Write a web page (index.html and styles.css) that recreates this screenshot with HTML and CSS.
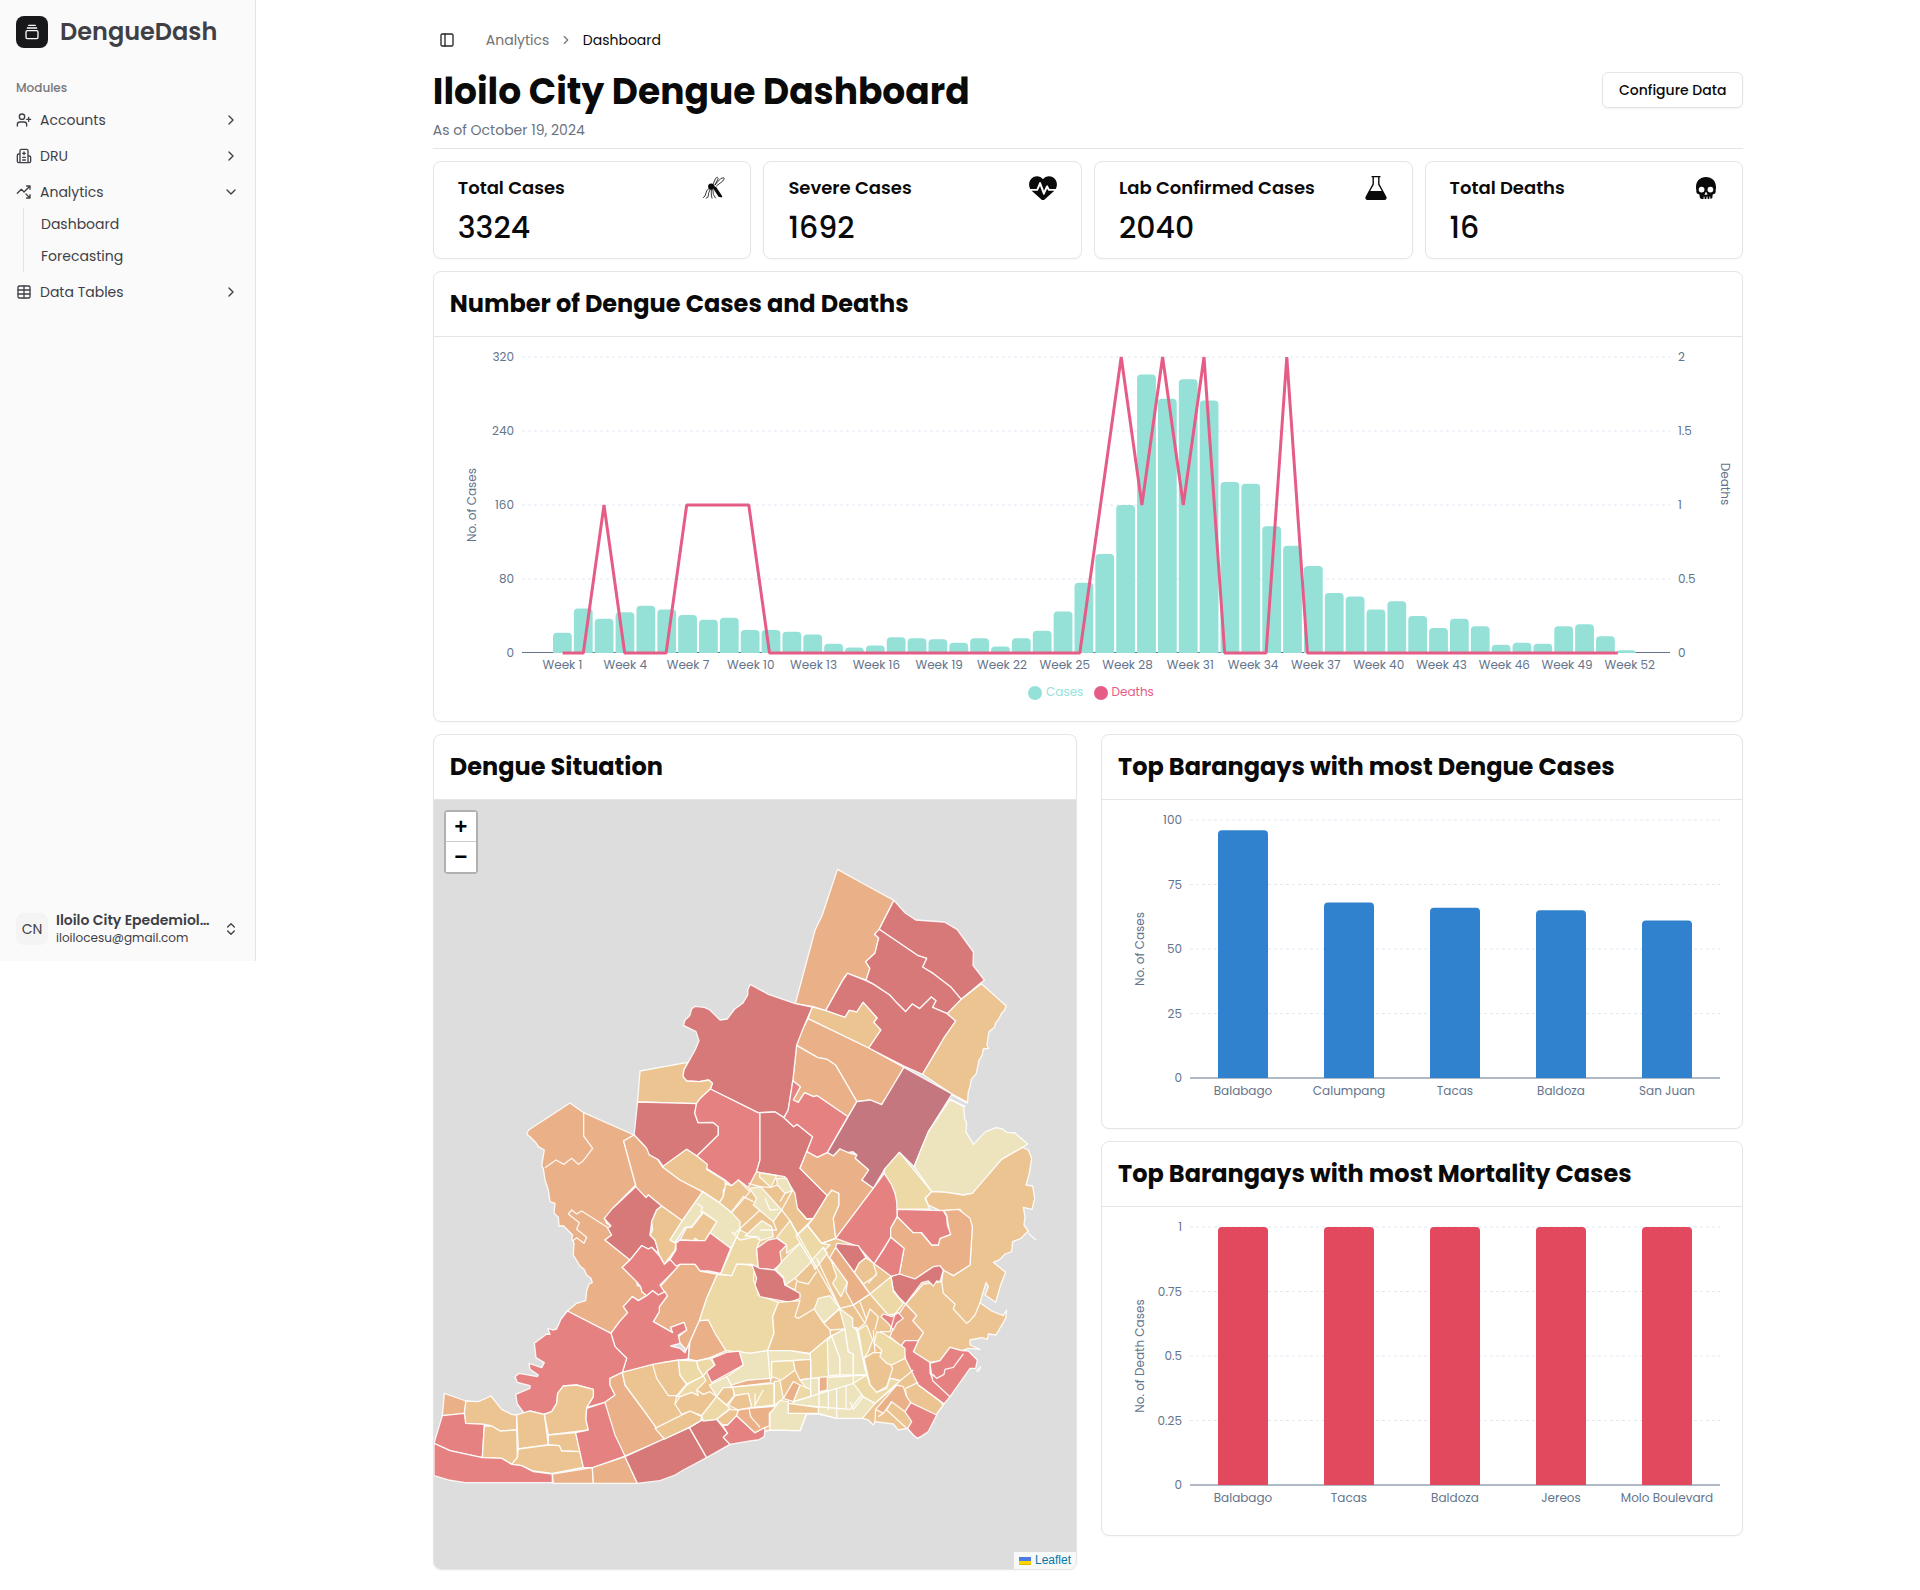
FILE: index.html
```html
<!DOCTYPE html>
<html lang="en">
<head>
<meta charset="utf-8">
<title>DengueDash</title>
<link rel="stylesheet" href="styles.css">
</head>
<body>
<div class="app">
  <aside class="sidebar">
    <div class="brand">
      <span class="brand-mark"><svg class="icon" viewBox="0 0 24 24"><path d="M7 2h10M5 6h14"/><rect x="3" y="10" width="18" height="12" rx="2"/></svg></span>
      <span class="brand-name">DengueDash</span>
    </div>
    <div class="group-label">Modules</div>
    <nav class="menu">
      <a class="item"><svg class="icon" viewBox="0 0 24 24"><path d="M16 21v-2a4 4 0 0 0-4-4H6a4 4 0 0 0-4 4v2M19 8v6M22 11h-6"/><circle cx="9" cy="7" r="4"/></svg><span>Accounts</span><svg class="icon" viewBox="0 0 24 24"><path d="m9 18 6-6-6-6"/></svg></a>
      <a class="item"><svg class="icon" viewBox="0 0 24 24"><path d="M12 6v4M14 14h-4M14 18h-4M14 8h-4M18 12h2a2 2 0 0 1 2 2v6a2 2 0 0 1-2 2H4a2 2 0 0 1-2-2v-9a2 2 0 0 1 2-2h2M18 22V4a2 2 0 0 0-2-2H8a2 2 0 0 0-2 2v18"/></svg><span>DRU</span><svg class="icon" viewBox="0 0 24 24"><path d="m9 18 6-6-6-6"/></svg></a>
      <div>
        <a class="item"><svg class="icon" viewBox="0 0 24 24"><path d="M14.828 14.828 21 21M21 16v5h-5M21 3l-9 9-4-4-6 6M21 8V3h-5"/></svg><span>Analytics</span><svg class="icon" viewBox="0 0 24 24"><path d="m6 9 6 6 6-6"/></svg></a>
        <div class="submenu"><a>Dashboard</a><a>Forecasting</a></div>
      </div>
      <a class="item"><svg class="icon" viewBox="0 0 24 24"><path d="M12 3v18M3 9h18M3 15h18"/><rect x="3" y="3" width="18" height="18" rx="2"/></svg><span>Data Tables</span><svg class="icon" viewBox="0 0 24 24"><path d="m9 18 6-6-6-6"/></svg></a>
    </nav>
    <div class="account">
      <span class="avatar">CN</span>
      <div class="who"><b>Iloilo City Epedemiol…</b><small>iloilocesu@gmail.com</small></div>
      <svg class="icon" viewBox="0 0 24 24"><path d="m7 15 5 5 5-5M7 9l5-5 5 5"/></svg>
    </div>
  </aside>

  <main class="main">
    <div class="content">
      <div class="crumbs">
        <span class="trigger"><svg class="icon" viewBox="0 0 24 24"><rect x="3" y="3" width="18" height="18" rx="2"/><path d="M9 3v18"/></svg></span>
        <span class="crumb">Analytics</span>
        <svg class="icon crumb-sep" viewBox="0 0 24 24"><path d="m9 18 6-6-6-6"/></svg>
        <span class="crumb-here">Dashboard</span>
      </div>
      <header class="head">
        <div>
          <h1>Iloilo City Dengue Dashboard</h1>
          <p>As of October 19, 2024</p>
        </div>
        <button>Configure Data</button>
      </header>

      <section class="stats">
        <div class="card stat"><div class="stat-top"><h3>Total Cases</h3>
          <svg class="glyph" viewBox="0 0 24 24"><circle cx="9.200" cy="10.600" r="3.100" fill="currentColor"/><path fill="currentColor" d="M11.500 9.500 14.500 11.500 20.300 20.300 19.800 21.600 16.500 20.800 11.300 12.800z"/><path class="hair" d="M11 8.500 13.500 2.500 15.300 1.300 16.200 2.600 13 9M12.500 9.300l6.300-6.800 2.900-.8.600 1L20.800 5 14.200 10.200M7 12.500 4.800 14.500 3 20 1 21.800M8.300 13 6.800 16.500 6 21 3.800 22.300M9.300 13v6l.8 3.500M10.800 13l.6 5.500 2.300 3.800"/></svg></div><strong>3324</strong></div>
        <div class="card stat"><div class="stat-top"><h3>Severe Cases</h3>
          <svg class="glyph wide" viewBox="0 0 28 24"><path fill="currentColor" d="M14 3.200C16.200 0 20.500-.6 23.500 1c4.500 2.300 5.500 8 3.300 12H20.500l-1.600-3.300a.9.9 0 0 0-1.600 0l-2.300 5-3.100-8.100a.9.900 0 0 0-1.700.1L7.600 13H1.200C-1 9 0 3.300 4.500 1c3-1.600 7.300-1 9.500 2.200zM2.600 14.700h6.200l2.200-4.700 3.100 8.300c.3.700 1.200.7 1.500 0l2.500-5.500 1.300 2h6L15 24a1.500 1.500 0 0 1-2 0z"/></svg></div><strong>1692</strong></div>
        <div class="card stat"><div class="stat-top"><h3>Lab Confirmed Cases</h3>
          <svg class="glyph" viewBox="0 0 24 24"><path fill="currentColor" d="M7.500 0h9v1.300h-1V8l6.900 12.800c.7 1.700-.2 3.200-1.900 3.200h-17c-1.700 0-2.600-1.500-1.900-3.200L8.500 8V1.300h-1zm2.400 1.300V8.400L6.200 15h11.600l-3.700-6.600V1.300z"/></svg></div><strong>2040</strong></div>
        <div class="card stat"><div class="stat-top"><h3>Total Deaths</h3>
          <svg class="glyph" viewBox="0 0 24 24"><path fill="currentColor" fill-rule="evenodd" d="M12 1c6 0 10 4.300 10 10 0 2-.5 3.300-.3 4.500.1 1.700-1 2.500-3 3l-.4 3.500-1.800 1-.3-2.500h-.7l-.2 2.500h-1.600l-.3-2.500h-.8l-.3 2.500H10.700l-.300-2.500h-.7l-.2 2.500H7.700l-1.800-1-.5-3.500c-2-.5-3.200-1.300-3.100-3C2.500 14.300 2 13 2 11 2 5.300 6 1 12 1zM7.600 10.700a2.900 2.900 0 1 0 0 5.800 2.900 2.900 0 0 0 0-5.800zm8.800 0a2.900 2.900 0 1 0 0 5.800 2.900 2.900 0 0 0 0-5.800zM12 15.500l-1.600 3.300h3.200z"/></svg></div><strong>16</strong></div>
      </section>

      <section class="card panel">
        <h2>Number of Dengue Cases and Deaths</h2>
        <svg class="chart" id="weekly" width="1308" height="384" viewBox="434 337 1308 384"></svg>
      </section>

      <div class="split">
        <section class="card panel">
          <h2>Dengue Situation</h2>
          <div class="map">
            <svg width="642" height="769" viewBox="434 800 642 769">
              <g transform="translate(740 1130) scale(.33333)">
                <path class="t" d="M-62 218-40 160 25 150 50 124 135 140 262 197 400 402 610 420 550 610 500 690 610 825 590 852 545 918 532 925 520 915 503 895 475 900 460 882 405 875 400 885 385 870 367 865 290 865 235 852 200 852 180 902 90 900-70 940-120 840-90 770-100 668-10 430 0 300z"/>
                <path class="t" d="M-353 727-230 697-155 687-90 683 0 660 100 830-70 870-152 892-227 927-345 765z"/>
              </g>
              <g transform="translate(430 730) scale(.42092 .33333)">
                <path class="o" d="M968 418 1035 465 1102 511 1067 598 1056 613 1066 624 1057 670 1035 695 1045 715 1036 750 992 730 985 740 940 842 910 830 868 821 915 600 932 555z"/>
                <path class="d" d="M1102 511 1129 549 1154 570 1222 576 1252 598 1291 666 1290 706 1317 750 1262 808 1238 772 1196 731 1170 711 1180 685 1158 676 1067 598z"/>
                <path class="d" d="M1067 598 1158 676 1180 685 1170 711 1196 731 1238 772 1262 808 1229 851 1194 832 1202 812 1191 801 1163 836 1146 822 1130 845 1110 820 1092 795 1055 764 1036 750 1045 715 1035 695 1057 670 1066 624 1056 613z"/>
                <path class="d" d="M992 730 1036 752 1055 764 1092 795 1110 820 1130 845 1146 822 1163 836 1191 801 1202 812 1194 832 1229 851 1249 873 1222 922 1170 1033 1126 1008 1042 954 1071 900 1054 877 1062 864 1029 817 1014 846 996 841 986 862 940 842 980 752z"/>
                <path class="t" d="M1310 761 1369 828 1365 840 1357 852 1350 870 1344 878 1341 892 1328 905 1323 945 1327 955 1314 957 1312 975 1304 992 1298 1030 1286 1048 1283 1070 1279 1085 1277 1117 1240 1092 1170 1033 1222 922 1249 873 1229 851 1262 808z"/>
                <path class="t" d="M908 831 940 842 986 862 996 841 1014 846 1029 817 1062 864 1054 877 1071 900 1042 954 898 866z"/>
                <path class="o" d="M898 866 1042 954 1126 1012 1096 1080 1073 1124 1046 1110 1014 1115 964 1006 943 988 920 982 871 946 880 910z"/>
                <path class="o" d="M871 946 920 982 943 988 964 1006 1014 1115 993 1160 920 1097 911 1100 890 1088 875 1117 863 1110 880 1070 862 1052z"/>
                <path class="d" d="M761 763 804 793 868 821 908 831 885 900 871 946 862 1052 851 1140 841 1163 820 1146 779 1148 666 1077 671 1060 662 1050 640 1055 610 1053 601 1040 603 1020 612 1000 630 960 639 932 632 905 602 886 606 870 617 857 622 836 630 829 652 832 665 840 689 870 706 867 724 837 743 820 755 795 755 779z"/>
                <path class="t" d="M499 1023 612 997 603 1020 601 1040 610 1053 640 1055 662 1050 671 1060 666 1077 640 1108 633 1121 493 1116z"/>
                <path class="d" d="M493 1116 633 1121 629 1150 637 1178 672 1177 685 1190 685 1215 634 1278 610 1258 554 1310 543 1290 519 1273 512 1250 485 1215z"/>
                <path class="r" d="M666 1077 779 1148 784 1148 784 1290 776 1324 756 1372 733 1350 717 1367 701 1350 657 1315 657 1303 634 1278 685 1215 685 1190 672 1177 637 1178 629 1150 633 1121 640 1108z"/>
                <path class="d" d="M784 1148 820 1146 841 1163 864 1190 872 1183 909 1220 895 1265 879 1315 944 1397 911 1465 895 1467 873 1435 867 1390 843 1340 784 1328 776 1324 784 1290z"/>
                <path class="r" d="M890 1088 911 1100 920 1097 993 1160 974 1200 944 1268 920 1282 895 1265 909 1220 872 1183 864 1190 841 1163 851 1140 862 1052 880 1070 863 1110 875 1117z"/>
                <path class="p" d="M1126 1012 1240 1092 1184 1205 1166 1260 1150 1310 1115 1267 1080 1318 1053 1375 1026 1350 1042 1320 1010 1285 1014 1275 1005 1265 990 1268 974 1257 958 1278 944 1268 1014 1115 1046 1110 1073 1124z"/>
                <path class="v" d="M1236 1108 1268 1130 1270 1165 1275 1180 1273 1205 1291 1243 1320 1205 1345 1193 1360 1197 1370 1207 1390 1209 1420 1242 1408 1252 1358 1288 1289 1390 1267 1395 1228 1387 1192 1385 1150 1310 1166 1260 1184 1205z"/>
                <path class="l" d="M1240 1095 1277 1120M1236 1108 1272 1130"/>
              </g>
              <g transform="translate(430 1130) scale(.33333)">
                <path class="o" d="M420-81 461-52 612 15 581 33 617 165 545 238 540 253 523 265 530 280 543 288 535 295 545 315 525 330 600 390 577 412 620 455 622 467 632 470 636 485 650 497 625 512 607 500 580 530 593 548 567 577 543 610 412 543 440 520 467 512 470 482 477 462 487 458 483 445 470 435 462 418 450 408 430 375 432 340 425 325 428 315 400 287 387 288 385 262 372 250 375 220 360 215 355 180 345 150 340 115 335 108 343 60 325 50 318 38 300 20 290 12 296 0z"/>
                <path class="l" d="M461-52V18L488 55 460 92 445 103 425 85 402 103 378 90 345 113M545 300 455 243 440 252 425 240 415 252 448 278 440 298 470 322 462 340 440 323 428 333"/>
                <path class="o" d="M612 15 650 55 658 75 683 88 697 110 750 150 818 185 757 272 695 228 655 195 648 203 617 180V165L581 33z"/>
                <path class="t" d="M697 110 770 58 800 78 832 103 830 118 885 152 887 172 880 180 880 200 868 218 818 185 750 150z"/>
                <path class="t" d="M868 218 880 200 887 162 905 167 925 150 960 185 905 248z"/>
                <path class="d" d="M617 170 648 203 655 195 695 228 680 240 665 275 660 315 675 330 688 372 665 352 655 357 635 347 600 390 525 330 545 315 533 295 543 288 523 265 545 238z"/>
                <path class="t" d="M695 228 757 272 720 330 738 340 735 360 703 403 688 375 675 330 660 315 668 300 665 275 680 240z"/>
                <path class="r" d="M600 390 635 347 655 357 665 352 690 380 703 403 720 388 745 410 690 465 705 485 685 495 668 482 650 497 636 485 632 470 620 455 577 412z"/>
                <path class="v" d="M818 185 868 218 905 248 930 275V305L902 355 840 308 860 275 820 245 785 290 765 292 735 338 720 330 757 272z"/>
                <path class="l" d="M800 220 818 232 812 245 820 250"/>
                <path class="t" d="M820 248 860 275 825 332 805 332 795 325 790 332 750 330 770 292 785 293z"/>
                <path class="r" d="M840 308 902 355 872 430 835 423 810 423 795 403 750 403 738 408 720 388 738 360 738 340 750 330 790 332 825 332z"/>
                <path class="o" d="M750 403 795 403 810 423 862 433 830 505 808 572 780 635 765 668 765 655 750 640 745 620 770 600 762 577 722 592 728 608 670 575 688 545 688 530 712 498 692 468z"/>
                <path class="r" d="M650 497 668 482 685 495 705 485 712 498 688 530 688 545 670 575 728 608 722 592 762 577 770 600 745 615 750 640 722 648 750 655 765 668 778 640 775 687 700 697 577 727 590 685 555 650 543 610 567 577 593 548 580 530 607 500 625 512z"/>
                <path class="o" d="M835 570 888 662 840 683 800 693 775 687 780 635 808 572z"/>
                <path class="y" d="M862 433 905 437 920 402 960 405 975 412 970 450 980 470 985 495 1045 517 1028 560 1032 610 1013 662 960 670 888 662 855 610 835 570 808 572 830 505z"/>
                <path class="r" d="M412 543 543 610 555 650 590 685 577 727 540 745 540 765 555 795 525 817 470 832 490 800 490 778 440 765 400 768 383 790 380 820 365 845 340 853 300 843 283 850 262 822 257 793 300 775 300 767 262 757 255 740 268 730 322 740 325 735 300 718 297 700 335 713 343 698 318 683 313 640 350 612 360 613 353 595 368 600 380 597 393 567z"/>
                <path class="t" d="M490 778V800L470 832 468 870 475 900 355 915 343 853 365 845 380 820 383 790 400 768 440 765z"/>
                <path class="o" d="M43 790 108 813 103 850 37 857z"/>
                <path class="t" d="M108 813 145 815 183 798 215 838 245 853 260 855 260 900 210 903 185 888 163 883 107 880 103 850z"/>
                <path class="r" d="M37 857 103 850 107 880 163 883 157 983 60 962 12 940z"/>
                <path class="t" d="M163 888 185 888 210 903 260 900 262 983 245 1003 215 985 157 983z"/>
                <path class="t" d="M260 855 300 843 343 853 355 945 265 957z"/>
                <path class="t" d="M355 915 437 908 450 965 395 963 388 947 355 945z"/>
                <path class="t" d="M265 957 355 945 388 947 395 963 450 965 460 1012 367 1030 310 1023 275 1007 245 1003 262 983z"/>
                <path class="r" d="M12 940 60 962 157 983 215 985 245 1003 275 1007 310 1025 367 1032V1058H105L55 1050 12 1037z"/>
                <path class="r" d="M470 835 525 817 585 978 490 1013 460 1012 437 908 475 900 468 870z"/>
                <path class="o" d="M577 727 585 765 648 850 703 927 585 978 555 915 525 817 555 795 540 765 540 745z"/>
                <path class="o" d="M367 1032 487 1013 490 1060H370z"/>
                <path class="o" d="M487 1013 585 980 622 1060H490z"/>
                <path class="d" d="M585 980 778 892 830 983 760 1020 735 1035 690 1052 622 1060z"/>
                <path class="d" d="M778 892 812 872 860 868 893 910 880 922 900 943 830 983z"/>
                <path class="t" d="M577 727 668 703 740 797 735 822 815 857 812 872 778 892 703 927 648 850 585 765z"/>
                <path class="t" d="M675 895 735 865 780 843 815 860 812 872 778 892 703 927z"/>
                <path class="t" d="M735 822 750 800 800 780 820 793 840 785 860 800 815 857 780 843 755 853z"/>
                <path class="t" d="M668 703 745 690 750 735 770 762 740 797 715 797 680 745z"/>
                <path class="y" d="M745 690 800 693 805 715 820 738 770 762 750 735z"/>
                <path class="y" d="M800 693 840 685 855 705 830 725 820 738 805 715z"/>
                <path class="y" d="M742 800 770 765 820 738 828 752 800 780 805 797 785 787 750 800z"/>
                <path class="r" d="M845 685 890 667 928 663 940 705 845 758 830 725 855 705z"/>
                <path class="v" d="M928 665 960 670 1013 662 1022 700 1022 745 905 768 890 740 940 705z"/>
                <path class="v" d="M838 765 890 740 905 768 860 800z"/>
                <path class="t" d="M860 800 880 773 912 772 912 798 890 825z"/>
                <path class="o" d="M905 765 955 750 1022 745 1022 758 905 772z"/>
                <path class="y" d="M907 771 1033 760 1033 830 965 832 955 790 915 797z"/>
                <path class="t" d="M915 797 955 790 965 832 925 840 895 825z"/>
                <path class="y" d="M815 857 860 800 900 835 860 868 820 873z"/>
                <path class="t" d="M860 868 900 838 925 840 920 857 893 885 878 885z"/>
                <path class="r" d="M878 887 893 885 920 857 975 908 1005 892 1003 920 985 930 965 932 900 943 880 922 893 910z"/>
                <path class="o" d="M925 840 957 835 1045 828 1018 850 1018 888 1005 892 975 908 920 857z"/>
                <path class="l" d="M957 835 962 860 990 892M975 790 975 830M1000 780 975 825"/>
              </g>
              <g transform="translate(740 1130) scale(.33333)">
                <path class="t" d="M262 197 275 180 297 190V225L280 265 287 325 245 340 203 287 220 265z"/>
                <path class="y" d="M-25 355 0 300 60 330 50 355 55 415 35 403-10 402-25 437-58 433z"/>
                <path class="o" d="M200 65 232 82 262 68 280 78 300 57 325 68 350 75 345 85 386 120 365 150 400 175 287 325 280 265 297 225V190L275 180 262 197 180 115z"/>
                <path class="y" d="M478 67 575 185 555 205 570 237 470 238 465 190 433 130V118z"/>
                <path class="r" d="M433 130 455 165 465 190 470 215 472 260 452 295 452 322 402 402 355 350 287 325 400 175z"/>
                <path class="t" d="M848 52 865 60 875 85 868 130 858 165 878 168 884 205 876 238 850 232 855 260 852 285 865 303 843 325 818 335 815 365 795 372 780 388 760 397 797 427 782 465 767 517 735 495 745 470 738 458 720 518 755 543 790 557 800 540 797 565 768 615 745 612 742 628 725 623 690 630 690 645 720 658 685 655 665 662 630 652 600 692 570 697 530 678 520 665 535 632 550 608 518 572 530 557 497 522 550 462 605 455 610 420 640 437 690 405 697 290 660 238 600 242 565 225 557 205 575 185 620 187 670 195 697 190 785 88z"/>
                <path class="l" d="M605 455 610 490 645 522 640 537 680 580 690 572 705 555 720 518M865 310 888 330"/>
                <path class="o" d="M472 260 520 308 540 305 575 345 595 345 600 325 630 315 620 255 610 242 655 238 690 265 697 290 690 405 640 437 610 420 600 410 580 410 525 447 478 432 492 355 452 322 452 295z"/>
                <path class="r" d="M472 238 610 242 620 260 622 285 632 313 600 325 595 345 575 345 545 308 520 308 472 260z"/>
                <path class="r" d="M452 322 492 355 478 432 453 440 402 402 430 360z"/>
                <path class="d" d="M453 440 478 432 525 447 580 410 600 407 610 420 600 455 590 453 580 468 565 453 545 458 530 478 497 522 475 500 460 480z"/>
                <path class="d" d="M290 340 355 347 378 383 357 400 343 428 287 352z"/>
                <path class="t" d="M378 383 455 440 390 492 370 462 343 428 357 400z"/>
                <path class="l" d="M400 402 410 430 385 460M370 462 410 435"/>
                <path class="y" d="M390 492 453 440 460 485 490 520 465 552 445 555z"/>
                <path class="o" d="M497 522 530 557 518 572 550 608 535 632 495 632 485 650 450 620 475 555z"/>
                <path class="r" d="M423 560 430 552 455 560 475 548 490 565 470 580 460 600 443 578z"/>
                <path class="o" d="M287 352 390 492 340 525 318 485 322 457 268 385z"/>
                <path class="y" d="M272 387 322 457 303 500 278 460 290 440z"/>
                <path class="r" d="M485 645 495 632 535 632 520 665 570 697 570 728 580 750 630 800 612 822 535 765 497 687z"/>
                <path class="r" d="M570 700 600 692 630 652 665 662 685 663 712 690 707 715 690 715 630 800 578 752 575 735z"/>
                <path class="l" d="M570 728 590 745 612 733 615 718 640 712 670 672M572 730 585 738"/>
                <path class="r" d="M710 722 722 710 716 724z"/>
                <path class="r" d="M512 818 590 855 565 905 545 918 532 925 520 915 503 895 515 875 495 845z"/>
                <path class="o" d="M407 838 470 765 490 770 500 800 512 818 495 845 455 815 430 850z"/>
                <path class="l" d="M535 765 612 822M497 775 535 757M500 800 495 775M407 838 405 875M430 850 415 860M455 815 440 840 500 895M455 745 480 752 520 720M370 800 405 820 470 765"/>
                <path class="r" d="M50 355 85 330 110 325 140 345 120 365 125 400 100 420 55 415z"/>
                <path class="d" d="M35 403 60 415 105 420 130 445 135 465 180 490V505L150 517 60 500 45 465 50 445z"/>
                <path class="y" d="M110 322 150 272 215 393 180 340 140 370 140 345z"/>
                <path class="v" d="M180 340 215 395 165 445 135 465 130 440 107 420 125 395z"/>
                <path class="y" d="M168 318 203 287 245 340 270 345 230 385 213 393z"/>
                <path class="v" d="M213 393 250 352 262 370 225 418z"/>
                <path class="v" d="M235 505 270 497 300 535 252 578 222 540z"/>
                <path class="t" d="M115 517 180 512 165 560 175 565 222 537 250 578 270 600 272 618 210 670 150 662 83 662 102 610 98 560z"/>
                <path class="y" d="M210 670 272 618 315 597 350 592 380 735 212 745z"/>
                <path class="v" d="M262 632 275 618 300 685V735L265 737z"/>
                <path class="v" d="M275 618 315 597 325 665 340 672V735H300V685z"/>
                <path class="v" d="M298 535 338 565 338 590 350 600 380 735H340V672L325 665 315 597z"/>
                <path class="y" d="M355 600 380 585 398 630 385 665 372 685 375 720z"/>
                <path class="t" d="M372 685 400 668 430 668 458 715 440 770 410 787 390 765z"/>
                <path class="y" d="M410 605 430 610 495 655V685L455 705 440 700 420 680 425 660 402 640z"/>
                <path class="v" d="M83 662 150 662 210 672 212 688 95 695 95 745 90 745z"/>
                <path class="y" d="M95 695 160 692 165 720 125 750 95 740z"/>
                <path class="t" d="M160 692 212 688 212 745 180 750 165 720z"/>
                <path class="v" d="M180 750 212 745 380 735 370 800 405 820 367 865 290 865 235 850 145 850 160 815 212 790z"/>
                <path class="o" d="M237 742 262 740V780L237 786z"/>
                <path class="y" d="M160 815 180 765 212 778V800z"/>
                <path class="o" d="M130 805 145 780 160 755 180 765 160 815z"/>
                <path class="y" d="M103 755 120 752 130 805 120 815 103 825z"/>
                <path class="v" d="M90 850 120 812 145 815V850H200L180 902 90 900z"/>
                <path class="t" d="M145 820 205 828 235 832V850H145z"/>
                <path class="y" d="M380 735 390 765 410 787 440 775 450 745 480 752 405 820 370 800 340 760z"/>
                <path class="l" d="M160 815 340 760 340 735M237 742V830M265 780V840M290 775V865M318 765V835M205 828 330 838 365 795M212 690V800M330 815 340 838 370 800"/>
                <path class="y" d="M60 128 110 137 92 172 58 140z"/>
                <path class="v" d="M110 145 140 145 157 182 135 190 112 165z"/>
                <path class="v" d="M28 175 62 170 125 240 100 275 40 225 50 205z"/>
                <path class="v" d="M15 318 65 272 95 290 100 320 60 332 55 320z"/>
                <path class="l" d="M25 160 60 170 90 172M92 172 112 165M135 190 120 215M157 182 125 240 150 272M172 235 200 267 220 265M100 275 110 300 60 300M-15 310 60 240M-25 245 10 200 40 215M168 318 220 265M245 340 287 325M203 287 245 340M165 445 175 455 205 462 230 425M150 272 300 535M268 385 250 352M230 385 300 535M300 535 340 525 375 580 350 600M390 492 340 525M360 515 378 565M375 580 390 537 415 560 405 600M300 535 252 578M270 600 315 597M400 600 405 668M135 465 165 480 170 455M75 205 90 240 115 238M-25 305 0 330 50 320M465 552 450 605 420 605M103 755V825L45 832"/>
              </g>
            </svg>
            <div class="zoom"><span>+</span><span>−</span></div>
            <div class="credit"><svg width="12" height="8" viewBox="0 0 12 8"><path fill="#4c7be1" d="M0 0h12v4H0z"/><path fill="#ffd500" d="M0 4h12v3H0z"/><path fill="#e0bc00" d="M0 7h12v1H0z"/></svg> Leaflet</div>
          </div>
        </section>
        <div class="stack">
          <section class="card panel">
            <h2>Top Barangays with most Dengue Cases</h2>
            <svg class="chart" id="topCases" width="640" height="328" viewBox="1102 800 640 328"></svg>
          </section>
          <section class="card panel">
            <h2>Top Barangays with most Mortality Cases</h2>
            <svg class="chart" id="topDeaths" width="640" height="328" viewBox="1102 800 640 328"></svg>
          </section>
        </div>
      </div>
    </div>
  </main>
</div>
<script src="charts.js"></script>
</body>
</html>
```
FILE: styles.css
```css
* { box-sizing: border-box; margin: 0; padding: 0; }
body { font-family: Poppins, Inter, "Open Sans", sans-serif; font-size: 14px; line-height: 20px; color: #0a0a0a; background: #fff; }
.app { display: flex; align-items: flex-start; min-height: 1590px; }
.icon { width: 16px; height: 16px; flex: none; fill: none; stroke: currentColor; stroke-width: 2; stroke-linecap: round; stroke-linejoin: round; }

.sidebar { width: 256px; height: 961px; flex: none; display: flex; flex-direction: column; padding: 16px; background: #fafafa; border-right: 1px solid #e5e5e5; color: #3f3f46; }
.brand { display: flex; align-items: center; gap: 12px; height: 32px; }
.brand-mark { width: 32px; height: 32px; border-radius: 8px; background: #18181b; color: #fafafa; display: grid; place-items: center; }
.brand-name { font-size: 24px; font-weight: 600; line-height: 32px; }
.group-label { height: 32px; margin: 24px 0 0; line-height: 32px; font-size: 12px; font-weight: 500; color: #77777c; }
.menu { display: flex; flex-direction: column; gap: 4px; flex: 1; }
.item { display: flex; align-items: center; gap: 8px; height: 32px; }
.item span { flex: 1; }
.submenu { margin-left: 7px; border-left: 1px solid #e5e5e5; padding: 2px 0 2px 17px; display: flex; flex-direction: column; gap: 4px; }
.submenu a { height: 28px; line-height: 28px; }
.account { display: flex; align-items: center; gap: 8px; height: 32px; }
.avatar { width: 32px; height: 32px; border-radius: 8px; background: #f4f4f5; display: grid; place-items: center; }
.who { flex: 1; display: flex; flex-direction: column; white-space: nowrap; }
.who b { font-weight: 600; line-height: 17px; margin-top: -1px; }
.who small { font-size: 12px; line-height: 17px; }

.main { flex: 1; display: flex; justify-content: center; }
.content { width: 1310.4px; padding-top: 26px; }
.crumbs { display: flex; align-items: center; height: 28px; }
.trigger { width: 28px; height: 28px; display: grid; place-items: center; margin-right: 25px; color: #27272a; }
.crumb { color: #737373; width: 64px; }
.crumb-sep { width: 14px; height: 14px; color: #737373; margin: 0 10px 0 9px; }
.head { display: flex; justify-content: space-between; align-items: flex-start; height: 95px; padding-top: 18px; border-bottom: 1px solid #e5e5e5; }
h1 { font-size: 36px; line-height: 40px; font-weight: 700; }
.head p { margin-top: 8px; color: #6b7280; }
button { height: 36px; width: 141px; border: 1px solid #e5e5e5; border-radius: 6px; background: #fff; font: inherit; font-weight: 500; color: inherit; box-shadow: 0 1px 2px rgba(0,0,0,.05); }
.card { border: 1px solid #e5e5e5; border-radius: 8px; background: #fff; box-shadow: 0 1px 2px rgba(0,0,0,.03); }
.stats { display: grid; grid-template-columns: repeat(4, 1fr); gap: 12px; margin: 12px 0; }
.stat { height: 98px; padding: 14px 24px; }
.stat-top { display: flex; justify-content: space-between; align-items: center; height: 24px; }
.stat h3 { font-size: 18px; font-weight: 600; line-height: 24px; }
.stat strong { display: block; font-size: 30px; font-weight: 500; line-height: 36px; margin-top: 10px; }
.glyph { width: 24px; height: 24px; }
.glyph.wide { width: 28px; }
.hair { fill: none; stroke: currentColor; stroke-width: .8; }
.panel { overflow: hidden; }
.panel h2 { height: 65px; padding-left: 16px; border-bottom: 1px solid #e5e5e5; font-size: 24px; line-height: 64px; font-weight: 700; }
.chart { display: block; font-size: 12px; }
.chart text { fill: #64748b; }
.split { display: grid; grid-template-columns: 644fr 642fr; gap: 24px; margin-top: 12px; align-items: start; }
.stack { display: flex; flex-direction: column; gap: 12px; }

.map { position: relative; height: 769px; background: #ddd; }
.map svg { display: block; }
.map path { stroke: #fff; stroke-width: 1.3px; stroke-linejoin: round; stroke-opacity: .9; vector-effect: non-scaling-stroke; }
.o { fill: #eab088; } .t { fill: #ecc491; } .y { fill: #edd9a6; } .v { fill: #ede3bc; }
.r { fill: #e58181; } .d { fill: #d87979; } .p { fill: #c5777f; } .l { fill: none; }
.zoom { position: absolute; left: 10px; top: 10px; width: 34px; border: 2px solid rgba(0,0,0,.2); border-radius: 4px; background-clip: padding-box; }
.zoom span { display: block; height: 30px; background: #fff; text-align: center; font: bold 22px/33px "Liberation Mono", monospace; color: #000; }
.zoom span:first-child { border-bottom: 1px solid #ccc; line-height: 34px; }
.credit { position: absolute; right: 0; bottom: 0; display: flex; align-items: center; gap: 4px; padding: 0 5px; background: rgba(255,255,255,.8); color: #0078a8; font: 12px/17px "Liberation Sans", sans-serif; }
.map .credit path { stroke: none; }
```
FILE: charts.js
```js
const NS = 'http://www.w3.org/2000/svg';

function add(svg, name, attrs, text) {
  const el = document.createElementNS(NS, name);
  for (const key in attrs) el.setAttribute(key, attrs[key]);
  if (text !== undefined) el.textContent = text;
  svg.appendChild(el);
  return el;
}

function bar(svg, x, top, w, base, r, fill) {
  r = Math.min(r, base - top);
  add(svg, 'path', { fill, d: `M${x} ${base}V${top + r}q0 ${-r} ${r} ${-r}h${w - 2 * r}q${r} 0 ${r} ${r}V${base}z` });
}

function grid(svg, x1, x2, ys) {
  ys.forEach(y => add(svg, 'path', { d: `M${x1} ${y}H${x2}`, stroke: '#e2e8f0', 'stroke-dasharray': '3 3', fill: 'none' }));
}

function label(svg, x, y, text, anchor) {
  return add(svg, 'text', { x, y: y + 4, 'text-anchor': anchor || 'middle' }, text);
}

function turned(svg, x, y, text, angle) {
  add(svg, 'text', { transform: `translate(${x} ${y}) rotate(${angle})`, y: 4, 'text-anchor': 'middle' }, text);
}

const cases = [22, 48, 37, 44, 51, 47, 41, 36, 38, 25, 25, 23, 20, 10, 6, 8, 17, 16, 15, 11, 16, 7, 16, 24, 45, 76,
  107, 160, 301, 275, 296, 273, 185, 183, 137, 116, 94, 65, 61, 47, 56, 40, 27, 37, 29, 9, 11, 10, 29, 31, 18, 3];
const deaths = new Array(52).fill(0);
[[2, 1], [6, 1], [7, 1], [8, 1], [9, 1], [26, 1], [27, 2], [28, 1], [29, 2], [30, 1], [31, 2], [35, 2]].forEach(([i, v]) => { deaths[i] = v; });

const weekly = document.getElementById('weekly');
grid(weekly, 522, 1670, [357, 431, 505, 579]);
add(weekly, 'path', { d: 'M522 652.5H1670', stroke: '#64748b' });
cases.forEach((v, i) => bar(weekly, 553 + i * 20.86, 653 - v * 0.925, 18.8, 653, 4, '#95e1d8'));
add(weekly, 'polyline', {
  points: deaths.map((v, i) => `${(562.6 + i * 20.69).toFixed(1)},${653 - v * 148}`).join(' '),
  fill: 'none', stroke: '#e55c86', 'stroke-width': 3, 'stroke-linejoin': 'bevel'
});
[320, 240, 160, 80, 0].forEach((v, i) => label(weekly, 514, 357 + i * 74, v, 'end'));
[2, 1.5, 1, 0.5, 0].forEach((v, i) => label(weekly, 1678, 357 + i * 74, v, 'start'));
for (let w = 1; w <= 52; w += 3) label(weekly, 562.4 + (w - 1) * 20.93, 665, 'Week ' + w);
turned(weekly, 472, 505, 'No. of Cases', -90);
turned(weekly, 1725, 484, 'Deaths', 90);
add(weekly, 'circle', { cx: 1035, cy: 693, r: 7, fill: '#95e1d8' });
label(weekly, 1046, 692, 'Cases', 'start').style.fill = '#95e1d8';
add(weekly, 'circle', { cx: 1101, cy: 693, r: 7, fill: '#e55c86' });
label(weekly, 1111.5, 692, 'Deaths', 'start').style.fill = '#e55c86';

function ranking(id, max, ticks, rows, color, title) {
  const svg = document.getElementById(id);
  grid(svg, 1190, 1720, [820, 884.5, 949, 1013.5]);
  add(svg, 'path', { d: 'M1190 1078H1720', stroke: '#64748b' });
  rows.forEach(([name, value], i) => {
    bar(svg, 1218 + i * 106, 1078 - value / max * 258, 50, 1078, 4, color);
    label(svg, 1243 + i * 106, 1091, name);
  });
  ticks.forEach((v, i) => label(svg, 1182, 820 + i * 64.5, v, 'end'));
  turned(svg, 1140, 949, title, -90);
}
ranking('topCases', 100, [100, 75, 50, 25, 0],
  [['Balabago', 96], ['Calumpang', 68], ['Tacas', 66], ['Baldoza', 65], ['San Juan', 61]], '#3182ce', 'No. of Cases');
ranking('topDeaths', 1, [1, 0.75, 0.5, 0.25, 0],
  [['Balabago', 1], ['Tacas', 1], ['Baldoza', 1], ['Jereos', 1], ['Molo Boulevard', 1]], '#e3495e', 'No. of Death Cases');
```
